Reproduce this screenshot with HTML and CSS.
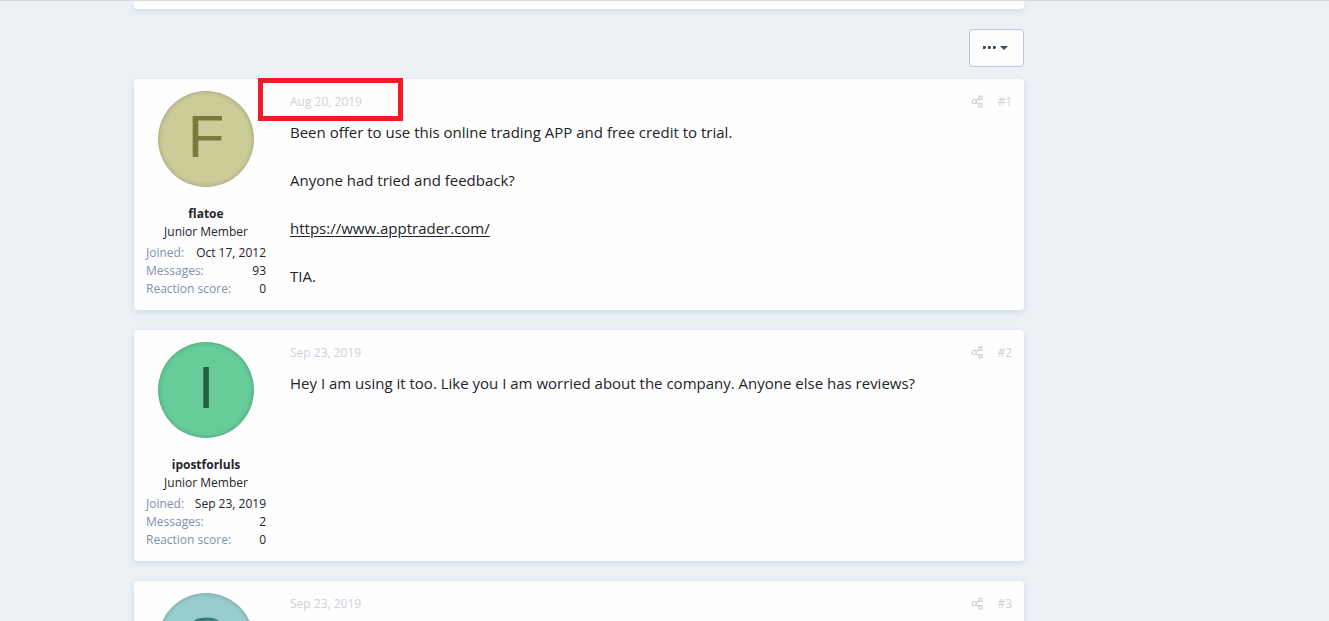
FILE: index.html
```
<!DOCTYPE html>
<html lang="en">
<head>
<meta charset="utf-8">
<title>Online trading app</title>
<link rel="stylesheet" href="styles.css">
</head>
<body>
<svg class="defs" aria-hidden="true">
  <symbol id="share" viewBox="0 0 12 14">
    <g fill="none" stroke="currentColor" stroke-width="1.2">
      <path d="M2.500 4.400h1.500l1.200 1.200v1.800L4 8.600H2.500L1.300 7.400V5.600zM8.100 1.100h2.800v3.300H8.100zM8.100 8.600h2.800v3.300H8.100zM5 5.500l3.100-2M5 7.500l3.100 2"/>
    </g>
  </symbol>
</svg>
<div class="page">
  <main class="thread">
    <div class="title-block"></div>
    <div class="toolbar">
      <button class="more" type="button" aria-label="More options">
        <svg width="28" height="6" viewBox="0 0 28 6" fill="currentColor" aria-hidden="true">
          <path d="M0 1h2l1 1v1L2 4H0zM5 1h2l1 1v1L7 4H5zM10 1h2l1 1v1l-1 1h-2zM17 1h8L21 5z"/>
        </svg>
      </button>
    </div>

    <article class="post">
      <aside class="user">
        <div class="avatar avatar-f">F</div>
        <h4 class="name">flatoe</h4>
        <div class="rank">Junior Member</div>
        <dl class="stats">
          <div><dt>Joined:</dt><dd>Oct 17, 2012</dd></div>
          <div><dt>Messages:</dt><dd>93</dd></div>
          <div><dt>Reaction score:</dt><dd>0</dd></div>
        </dl>
      </aside>
      <div class="content">
        <header class="meta">
          <span class="stamp"><time>Aug 20, 2019</time><span class="highlight"></span></span>
          <span class="actions"><a href="#" aria-label="Share"><svg width="12" height="14"><use href="#share"/></svg></a><a href="#">#1</a></span>
        </header>
        <div class="body">
          <p>Been offer to use this online trading APP and free credit to trial.</p>
          <p>Anyone had tried and feedback?</p>
          <p><a href="#">https://www.apptrader.com/</a></p>
          <p>TIA.</p>
        </div>
      </div>
    </article>

    <article class="post">
      <aside class="user">
        <div class="avatar avatar-i">I</div>
        <h4 class="name">ipostforluls</h4>
        <div class="rank">Junior Member</div>
        <dl class="stats">
          <div><dt>Joined:</dt><dd>Sep 23, 2019</dd></div>
          <div><dt>Messages:</dt><dd>2</dd></div>
          <div><dt>Reaction score:</dt><dd>0</dd></div>
        </dl>
      </aside>
      <div class="content">
        <header class="meta">
          <span class="stamp"><time>Sep 23, 2019</time></span>
          <span class="actions"><a href="#" aria-label="Share"><svg width="12" height="14"><use href="#share"/></svg></a><a href="#">#2</a></span>
        </header>
        <div class="body">
          <p>Hey I am using it too. Like you I am worried about the company. Anyone else has reviews?</p>
        </div>
      </div>
    </article>

    <article class="post">
      <aside class="user">
        <div class="avatar avatar-s">S</div>
      </aside>
      <div class="content">
        <header class="meta">
          <span class="stamp"><time>Sep 23, 2019</time></span>
          <span class="actions"><a href="#" aria-label="Share"><svg width="12" height="14"><use href="#share"/></svg></a><a href="#">#3</a></span>
        </header>
      </div>
    </article>
  </main>
</div>
</body>
</html>
```
FILE: styles.css
```
* {
  box-sizing: border-box;
}

body {
  margin: 0;
  height: 100vh;
  overflow: hidden;
  border-top: 1px solid #d8dae0;
  background: #edf1f6;
  color: #232429;
  font: 15px/24px "Open Sans", "Noto Sans", sans-serif;
}

.defs {
  position: absolute;
  width: 0;
  height: 0;
}

.page {
  display: grid;
  grid-template-columns: 1fr 171px;
  max-width: 1061px;
  margin: 0 auto;
}

.title-block {
  height: 8px;
  border-radius: 0 0 4px 4px;
  background: #fefefe;
  box-shadow: 0 2px 6px rgba(120, 165, 200, 0.3);
}

.toolbar {
  display: flex;
  justify-content: flex-end;
  padding: 20px 0 12px;
}

.more {
  display: flex;
  align-items: center;
  justify-content: center;
  width: 55px;
  height: 38px;
  padding: 0;
  border: 1px solid #b5c7dc;
  border-radius: 4px;
  background: #fefefe;
  color: #374b6d;
}

.post {
  display: flex;
  margin-bottom: 20px;
  border-radius: 4px;
  background: #fefefe;
  box-shadow: 0 2px 6px rgba(120, 165, 200, 0.3);
}

.user {
  width: 144px;
  padding: 12px;
  font-size: 12px;
  line-height: 18px;
  text-align: center;
}

.avatar {
  width: 96px;
  height: 96px;
  margin: 0 auto 18px;
  border-radius: 50%;
  box-shadow: inset 0 0 5px rgba(0, 0, 0, 0.25);
  font-family: "Liberation Sans", Arial, sans-serif;
  font-size: 60px;
  line-height: 92px;
}

.avatar-f {
  background: #cccc99;
  color: #7a7a3d;
}

.avatar-i {
  background: #66cc99;
  color: #24613f;
}

.avatar-s {
  background: #99cccc;
  color: #3d7a7a;
}

.name {
  margin: 0;
  font-weight: 700;
}

.rank {
  margin-bottom: 3px;
}

.stats {
  margin: 0;
}

.stats div {
  display: flex;
  justify-content: space-between;
}

.stats dt {
  color: #8390ae;
}

.stats dd {
  margin: 0;
}

.content {
  flex: 1;
  padding: 12px;
}

.meta {
  display: flex;
  justify-content: space-between;
  margin-bottom: 7px;
  color: #cfd1dc;
  font-size: 12px;
  line-height: 22px;
}

.stamp {
  position: relative;
}

.highlight {
  position: absolute;
  top: -13px;
  left: -32px;
  width: 145px;
  height: 43px;
  border: 5px solid #ee1c24;
}

.actions {
  display: flex;
  align-items: center;
  gap: 14px;
}

.actions a {
  display: flex;
  color: inherit;
  text-decoration: none;
}

.body p {
  margin: 0 0 24px;
}

.body p:last-child {
  margin-bottom: 0;
}

.body a {
  color: inherit;
  text-underline-offset: 2px;
}
```
